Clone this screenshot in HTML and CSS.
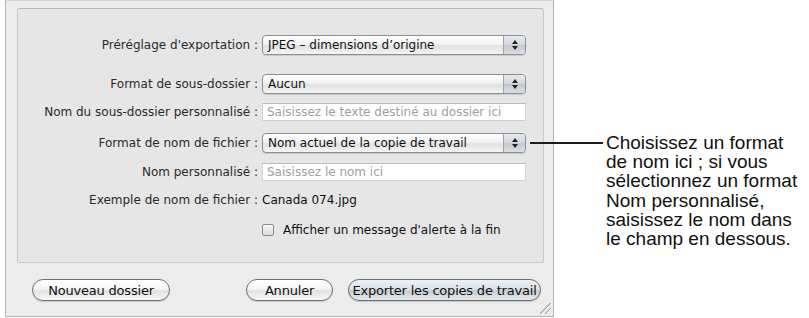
FILE: index.html
```html
<!DOCTYPE html>
<html lang="fr">
<head>
  <meta charset="UTF-8" />
  <title>Exporter les copies de travail</title>
  <link rel="stylesheet" href="styles.css">
</head>
<body>
  <div class="stage">
    <div class="dialog">
      <div class="group">
        <div class="row r1">
          <span class="lbl">Préréglage d'exportation :</span>
          <div class="popup"><span class="val">JPEG – dimensions d’origine</span><span class="step"></span></div>
        </div>
        <div class="row r2">
          <span class="lbl">Format de sous-dossier :</span>
          <div class="popup"><span class="val">Aucun</span><span class="step"></span></div>
        </div>
        <div class="row r3">
          <span class="lbl">Nom du sous-dossier personnalisé :</span>
          <div class="field">Saisissez le texte destiné au dossier ici</div>
        </div>
        <div class="row r4">
          <span class="lbl">Format de nom de fichier :</span>
          <div class="popup"><span class="val">Nom actuel de la copie de travail</span><span class="step"></span></div>
        </div>
        <div class="row r5">
          <span class="lbl">Nom personnalisé :</span>
          <div class="field">Saisissez le nom ici</div>
        </div>
        <div class="row r6">
          <span class="lbl">Exemple de nom de fichier :</span>
          <span class="plain">Canada 074.jpg</span>
        </div>
        <div class="row r7">
          <span class="lbl"></span>
          <label class="check"><span class="box"></span>Afficher un message d'alerte à la fin</label>
        </div>
      </div>

      <div class="buttons">
        <button class="btn b-new">Nouveau dossier</button>
        <button class="btn b-cancel">Annuler</button>
        <button class="btn b-export">Exporter les copies de travail</button>
      </div>
      <span class="grip"></span>
    </div>

    <div class="callout">
      <span class="leader"></span>
      <p class="note">Choisissez un format de nom ici ; si vous sélectionnez un format Nom personnalisé, saisissez le nom dans le champ en dessous.</p>
    </div>
  </div>
</body>
</html>
```

FILE: styles.css
```css
:root{
  --dlg-bg:#ececec;
  --grp-bg:#e6e6e6;
  --ui-font:"DejaVu Sans","Liberation Sans",sans-serif;
}
*{box-sizing:border-box;}
html,body{margin:0;background:#fff;}
body{width:809px;height:318px;overflow:hidden;}

.stage{display:flex;align-items:flex-start;height:318px;}

/* fenêtre */
.dialog{
  position:relative;
  margin-left:5px;
  width:549px;
  height:317px;
  background:var(--dlg-bg);
  border:1px solid #b4b4b4;
  border-top-color:#d4d4d4;
  padding:7px 9px 0 11px;
  font-family:var(--ui-font);
  font-size:12px;
  color:#1a1a1a;
}

/* boîte de groupe */
.group{
  height:255px;
  background:var(--grp-bg);
  border:1px solid #c9c9c9;
  border-top-color:#b9b9b9;
  border-radius:3px;
  padding-top:26px;
}
.row{display:flex;align-items:center;white-space:nowrap;}
.lbl{width:244px;text-align:right;padding-right:4px;color:#2a2a2a;}
.r1{height:20px;}
.r2{height:20px;margin-top:19px;}
.r3{height:18px;margin-top:9px;}
.r4{height:20px;margin-top:12px;}
.r5{height:18px;margin-top:10px;}
.r6{height:18px;margin-top:10px;}
.r7{height:18px;margin-top:12px;}

.popup{
  display:flex;
  width:264px;
  height:20px;
  border:1px solid #8e8e8e;
  border-radius:4px;
  background:linear-gradient(#fdfdfd,#f2f2f2 45%,#e1e1e1 55%,#f4f4f4);
  box-shadow:0 1px 1px rgba(0,0,0,.12);
  overflow:hidden;
}
.popup .val{flex:1;padding-left:5px;line-height:18px;color:#111;}
.popup .step{
  position:relative;
  width:22px;
  border-left:1px solid #a4a4a4;
  background:linear-gradient(#e6e9ed,#d3d7dd 50%,#c3c8cf 51%,#dadee3);
}
.popup .step::before,.popup .step::after{
  content:"";
  position:absolute;
  left:8px;
  border-left:3px solid transparent;
  border-right:3px solid transparent;
}
.popup .step::before{top:4px;border-bottom:4px solid #222;}
.popup .step::after{top:10px;border-top:4px solid #222;}

.field{
  width:264px;
  height:18px;
  background:#fff;
  border:1px solid #d2d2d2;
  border-top-color:#bdbdbd;
  padding-left:4px;
  line-height:16px;
  color:#a0a0a0;
}
.plain{color:#111;}

.check{display:flex;align-items:center;gap:9px;color:#111;}
.box{
  width:12px;
  height:12px;
  border:1px solid #8c8c8c;
  border-radius:2px;
  background:linear-gradient(#f8f8f8,#dcdcdc);
}

/* boutons */
.buttons{display:flex;align-items:center;margin-top:16px;padding-left:15px;padding-right:3px;}
.btn{
  height:22px;
  padding:0;
  border:1px solid #6f6f6f;
  border-radius:11px;
  background:linear-gradient(#ffffff,#f4f4f4 45%,#e2e2e2 55%,#f7f7f7);
  box-shadow:0 1px 1px rgba(0,0,0,.15);
  font-family:var(--ui-font);
  font-size:13px;
  letter-spacing:-.2px;
  white-space:nowrap;
  color:#111;
}
.b-new{width:138px;}
.b-cancel{width:87px;margin-left:auto;}
.b-export{
  width:193px;
  margin-left:15px;
  background:linear-gradient(#eef1f4,#dde2e8 45%,#c7cdd5 55%,#e4e8ec);
}

.grip{
  position:absolute;
  right:2px;
  bottom:2px;
  width:11px;
  height:11px;
  background:linear-gradient(135deg,transparent 45%,#a0a0a0 46%,#a0a0a0 52%,transparent 53%,transparent 68%,#a0a0a0 69%,#a0a0a0 75%,transparent 76%);
}

/* légende */
.callout{display:flex;align-items:flex-start;margin-left:-24px;position:relative;}
.leader{width:73px;height:2px;margin-top:142px;background:#1c1c1c;}
.note{
  margin:133px 0 0 3px;
  width:200px;
  font-family:"Liberation Sans",Arial,sans-serif;
  font-size:19px;
  line-height:19.2px;
  color:#111;
}
```
